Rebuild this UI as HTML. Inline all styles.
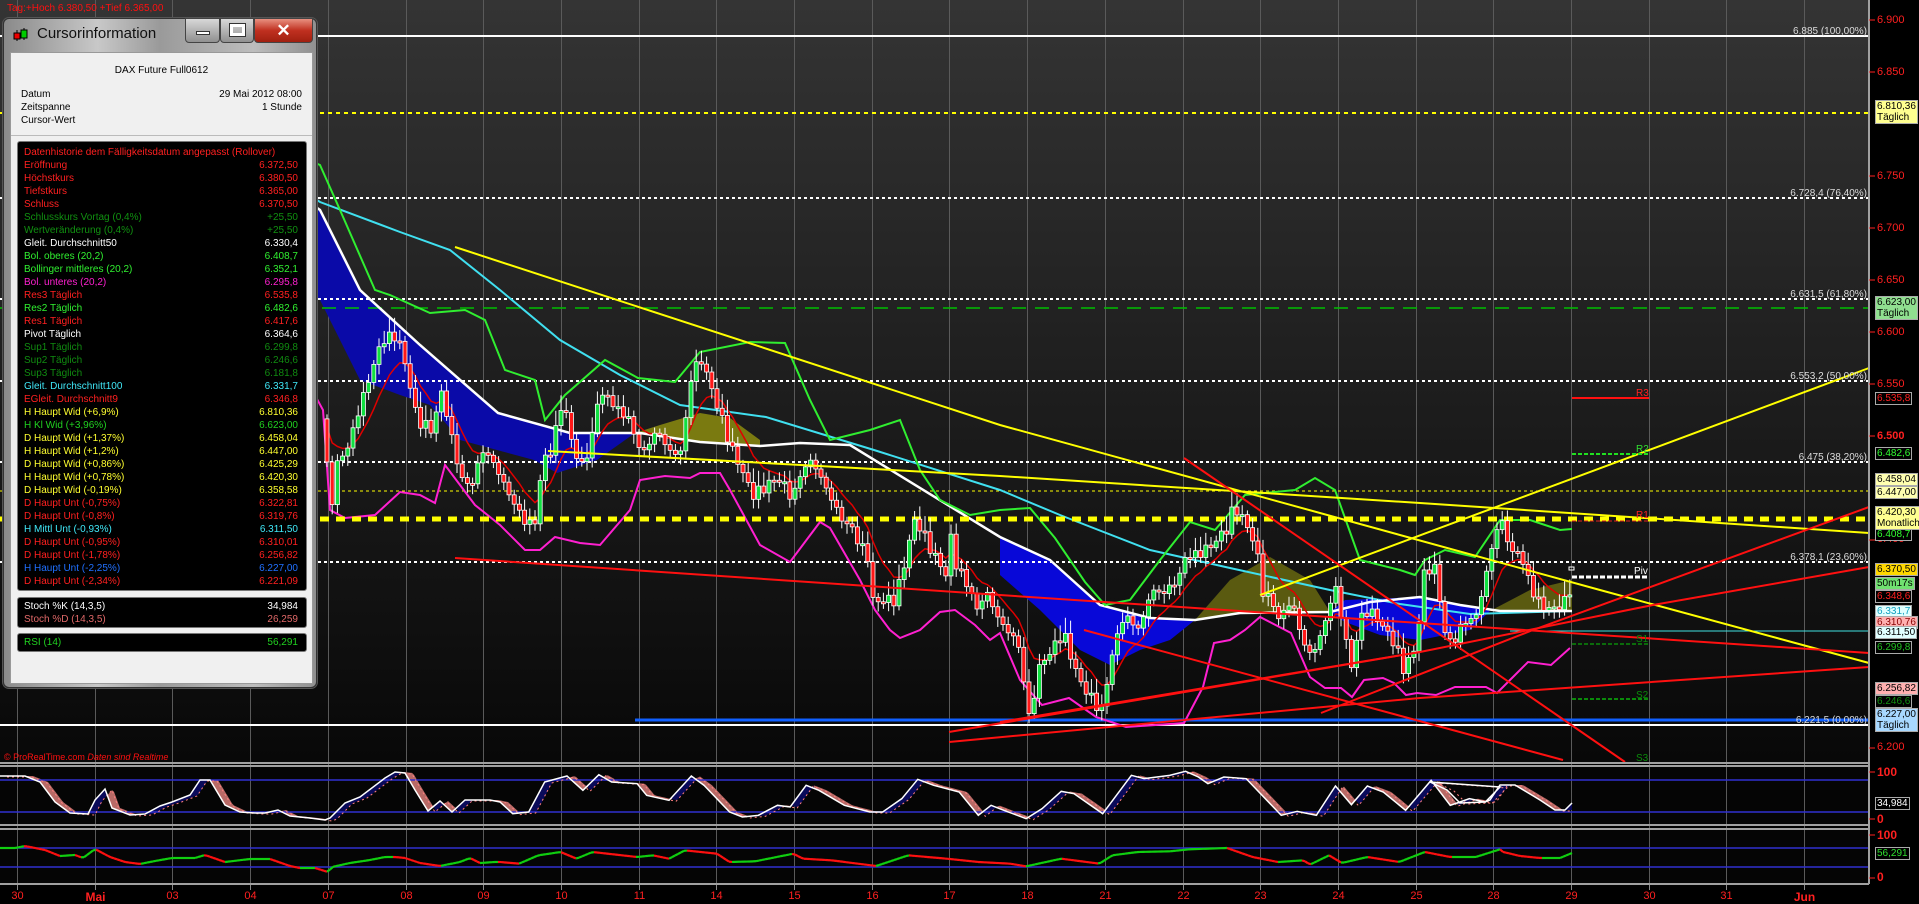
<!DOCTYPE html>
<html><head><meta charset="utf-8"><style>
*{margin:0;padding:0;box-sizing:border-box}
body{width:1919px;height:903px;overflow:hidden;background:#000;font-family:"Liberation Sans",sans-serif;position:relative}
#c{position:absolute;left:0;top:0}
.win{position:absolute;left:3px;top:18px;width:314px;height:670px;border-radius:6px;border:1px solid #333;
background:linear-gradient(90deg,#8a8a8a,#c8c8c8 30%,#9a9a9a 50%,#bdbdbd 80%,#909090);box-shadow:0 0 0 1px #555}
.ttl{position:absolute;left:33px;top:6px;font-size:15px;color:#101010}
.icon{position:absolute;left:9px;top:8px;width:16px;height:16px}
.btn{position:absolute;top:-1px;height:25px;border:1px solid #444;border-radius:0 0 4px 4px}
.content{position:absolute;left:6px;top:33px;width:303px;height:632px;background:#f0f0f0;border:1px solid #999}
.t{position:absolute;font-size:10px;white-space:nowrap}
.box{position:absolute;left:6px;width:290px;background:#000;border:1px solid #777;border-radius:3px}
.row{position:absolute;left:6px;right:8px;height:13px;font-size:10px;line-height:13px;white-space:nowrap}
.row span{position:absolute;right:0}
.ax{position:absolute;font-size:10px;white-space:nowrap;line-height:11px;padding:0 1px}
.rl{position:absolute;left:1877px;font-size:11px;color:#ff2020}
.dl{position:absolute;top:890px;font-size:11px;color:#ff2020;transform:translateX(-50%)}
.fl{position:absolute;font-size:10px;color:#ddd;right:52px}
</style></head><body>
<svg id="c" width="1919" height="903" xmlns="http://www.w3.org/2000/svg">
<defs>
<linearGradient id="bg" x1="0" y1="0" x2="0" y2="1"><stop offset="0" stop-color="#343434"/><stop offset="1" stop-color="#080808"/></linearGradient>
</defs>
<rect x="0" y="0" width="1869" height="763" fill="url(#bg)"/>
<rect x="0" y="766" width="1869" height="59" fill="#050505"/>
<rect x="0" y="829" width="1869" height="55" fill="#050505"/>
<g id="grid" stroke="#5a5a5a" stroke-width="1"></g>
<g id="under"></g>
<line x1="0" y1="36" x2="1869" y2="36" stroke="#fff" stroke-width="2"/>
<line x1="0" y1="113" x2="1869" y2="113" stroke="#ffff00" stroke-width="2" stroke-dasharray="4,4"/>
<g stroke="#fff" stroke-width="2" stroke-dasharray="3,3">
<line x1="0" y1="198" x2="1869" y2="198"/><line x1="0" y1="299" x2="1869" y2="299"/>
<line x1="0" y1="381" x2="1869" y2="381"/><line x1="0" y1="462" x2="1869" y2="462"/>
<line x1="0" y1="562" x2="1869" y2="562"/></g>
<line x1="0" y1="308" x2="1869" y2="308" stroke="#00c000" stroke-width="1.5" stroke-dasharray="14,9"/>
<line x1="0" y1="491" x2="1869" y2="491" stroke="#ffff00" stroke-width="1" stroke-dasharray="3,3"/>
<line x1="0" y1="725" x2="1869" y2="725" stroke="#fff" stroke-width="2"/>
<line x1="635" y1="720" x2="1869" y2="720" stroke="#1060ff" stroke-width="3"/>
<line x1="1510" y1="631" x2="1869" y2="631" stroke="#40e0e0" stroke-width="1"/>
<g id="ind"></g>
<line x1="0" y1="519" x2="1869" y2="519" stroke="#ffff00" stroke-width="5" stroke-dasharray="9,7"/>
<g id="cand"></g>
<g id="lines" fill="none" stroke-width="2">
<polyline points="455,247 1000,425 1600,590 1869,663" stroke="#ffff00"/>
<polyline points="548,451 1000,476 1420,503 1869,533" stroke="#ffff00"/>
<polyline points="1260,595 1869,368" stroke="#ffff00"/>
<polyline points="455,558 1000,595 1869,653" stroke="#ff1010"/>
<polyline points="1184,458 1625,762" stroke="#ff1010"/>
<polyline points="1321,713 1533,630 1869,507" stroke="#ff1010"/>
<polyline points="949,732 1420,652 1653,605 1869,567" stroke="#ff1010"/>
<polyline points="949,742 1420,698 1869,667" stroke="#ff1010"/>
<polyline points="1084,630 1563,760" stroke="#ff1010"/>
<polyline points="1000,722 1420,652" stroke="#ff1010"/>
</g>
<line x1="1572" y1="398" x2="1649" y2="398" stroke="#ff1010" stroke-width="2"/>
<line x1="1572" y1="454" x2="1649" y2="454" stroke="#20e020" stroke-width="2" stroke-dasharray="4,2"/>
<line x1="1572" y1="521" x2="1649" y2="521" stroke="#e02020" stroke-width="1" stroke-dasharray="4,2"/>
<line x1="1572" y1="577" x2="1649" y2="577" stroke="#fff" stroke-width="3" stroke-dasharray="5,2"/>
<rect x="1569" y="567" width="5" height="3" fill="none" stroke="#fff"/>
<line x1="1572" y1="644" x2="1649" y2="644" stroke="#0a8a0a" stroke-width="1.5" stroke-dasharray="4,2"/>
<line x1="1572" y1="699" x2="1649" y2="699" stroke="#0a8a0a" stroke-width="2" stroke-dasharray="4,2"/>
<g font-family="Liberation Sans" font-size="10">
<text x="1636" y="396" fill="#ff2020">R3</text><text x="1636" y="452" fill="#30e030">R2</text>
<text x="1636" y="518" fill="#ff2020">R1</text><text x="1634" y="574" fill="#fff">Piv</text>
<text x="1636" y="642" fill="#0a8a0a">S1</text><text x="1636" y="698" fill="#0a8a0a">S2</text><text x="1636" y="761" fill="#0a8a0a">S3</text>
</g>
<g id="osc"></g>
<g stroke="#3030d0" stroke-width="1.5"><line x1="0" y1="780" x2="1869" y2="780"/><line x1="0" y1="812" x2="1869" y2="812"/>
<line x1="0" y1="848" x2="1869" y2="848"/><line x1="0" y1="867" x2="1869" y2="867"/></g>
<g id="osc2"></g>
<g stroke="#a0a0a0" stroke-width="2" fill="none">
<line x1="0" y1="763" x2="1869" y2="763"/><line x1="0" y1="766" x2="1869" y2="766"/>
<line x1="0" y1="825" x2="1869" y2="825"/><line x1="0" y1="829" x2="1869" y2="829"/>
<line x1="0" y1="884" x2="1869" y2="884"/><line x1="1869" y1="0" x2="1869" y2="884"/></g>
<g id="ticks" stroke="#ff2020" stroke-width="1"></g>
<text x="4" y="760" font-size="9" fill="#ff1010" font-family="Liberation Sans">© ProRealTime.com <tspan font-style="italic">Daten sind Realtime</tspan></text>
<text x="7" y="11" font-size="10" fill="#ff1010" font-family="Liberation Sans">Tag:+Hoch 6.380,50 +Tief 6.365,00</text>
</svg>

<div class="fl" style="top:26px">6.885 (100,00%)</div>
<div class="fl" style="top:188px">6.728,4 (76,40%)</div>
<div class="fl" style="top:289px">6.631,5 (61,80%)</div>
<div class="fl" style="top:371px">6.553,2 (50,00%)</div>
<div class="fl" style="top:452px">6.475 (38,20%)</div>
<div class="fl" style="top:552px">6.378,1 (23,60%)</div>
<div class="fl" style="top:715px">6.221,5 (0,00%)</div>

<div class="rl" style="top:14px">6.900</div><div class="rl" style="top:66px">6.850</div>
<div class="rl" style="top:170px">6.750</div><div class="rl" style="top:222px">6.700</div>
<div class="rl" style="top:274px">6.650</div><div class="rl" style="top:326px">6.600</div>
<div class="rl" style="top:378px">6.550</div><div class="rl" style="top:430px;font-weight:bold">6.500</div>
<div class="rl" style="top:533px">6.400</div><div class="rl" style="top:741px">6.200</div>
<div class="rl" style="top:765px;font-weight:bold;font-size:12px">100</div>
<div class="rl" style="top:812px;font-weight:bold;font-size:12px">0</div>
<div class="rl" style="top:828px;font-weight:bold;font-size:12px">100</div>
<div class="rl" style="top:870px;font-weight:bold;font-size:12px">0</div>

<div class="ax" style="left:1875px;top:100px;background:#ffff90;border:1px solid #aaa;color:#000">6.810,36<br>Täglich</div>
<div class="ax" style="left:1875px;top:296px;background:#90e090;border:1px solid #aaa;color:#000">6.623,00<br>Täglich</div>
<div class="ax" style="left:1875px;top:392px;background:#000;border:1px solid #aaa;color:#ff2020">6.535,8</div>
<div class="ax" style="left:1875px;top:447px;background:#000;border:1px solid #aaa;color:#30ff30">6.482,6</div>
<div class="ax" style="left:1875px;top:473px;background:#ffffb0;border:1px solid #aaa;color:#000">6.458,04</div>
<div class="ax" style="left:1875px;top:486px;background:#ffffb0;border:1px solid #aaa;color:#000">6.447,00</div>
<div class="ax" style="left:1875px;top:528px;background:#000;border:1px solid #aaa;color:#30ff30">6.408,7</div>
<div class="ax" style="left:1875px;top:506px;background:#ffff90;border:1px solid #aaa;color:#000">6.420,30<br>Monatlich</div>
<div class="ax" style="left:1875px;top:563px;background:#ffd700;border:1px solid #aaa;color:#000">6.370,50</div>
<div class="ax" style="left:1875px;top:577px;background:#70e070;border:1px solid #aaa;color:#000">50m17s</div>
<div class="ax" style="left:1875px;top:590px;background:#000;border:1px solid #aaa;color:#ff2020">6.348,6</div>
<div class="ax" style="left:1875px;top:605px;background:#e0ffff;border:1px solid #aaa;color:#10a0c0">6.331,7</div>
<div class="ax" style="left:1875px;top:616px;background:#ffb0b0;border:1px solid #aaa;color:#800">6.310,76</div>
<div class="ax" style="left:1875px;top:626px;background:#e0ffff;border:1px solid #aaa;color:#000">6.311,50</div>
<div class="ax" style="left:1875px;top:641px;background:#000;border:1px solid #aaa;color:#20c020">6.299,8</div>
<div class="ax" style="left:1875px;top:682px;background:#ffb0b0;border:1px solid #aaa;color:#000">6.256,82</div>
<div class="ax" style="left:1875px;top:695px;background:#000;border:1px solid #aaa;color:#109010">6.246,6</div>
<div class="ax" style="left:1875px;top:708px;background:#a8d8ff;border:1px solid #aaa;color:#000">6.227,00<br>Täglich</div>
<div class="ax" style="left:1875px;top:797px;background:#000;border:1px solid #aaa;color:#fff">34,984</div>
<div class="ax" style="left:1875px;top:847px;background:#000;border:1px solid #aaa;color:#30e030">56,291</div>

<div id="dates"></div>

<div class="win">
  <svg class="icon" viewBox="0 0 16 16"><line x1="4" y1="3" x2="4" y2="14" stroke="#000"/><rect x="1" y="6" width="6" height="6" fill="#e00" stroke="#000"/><line x1="11" y1="1" x2="11" y2="13" stroke="#000"/><rect x="8" y="3" width="6" height="8" fill="#0c0" stroke="#000"/></svg>
  <div class="ttl">Cursorinformation</div>
  <div class="btn" style="left:181px;width:35px;background:linear-gradient(#d8d8d8,#909090)"><div style="position:absolute;left:10px;top:12px;width:14px;height:4px;background:#fff;border:1px solid #333"></div></div>
  <div class="btn" style="left:216px;width:34px;background:linear-gradient(#d8d8d8,#909090)"><div style="position:absolute;left:9px;top:5px;width:15px;height:12px;border:3px solid #fff;outline:1px solid #333"></div></div>
  <div class="btn" style="left:250px;width:59px;background:linear-gradient(#e89080,#c03020 50%,#a02010);color:#fff;font-size:17px;font-weight:bold;text-align:center;line-height:24px">✕</div>
  <div class="content">
    <div class="t" style="left:0;width:100%;text-align:center;top:12px">DAX Future Full0612</div>
    <div class="t" style="left:10px;top:36px">Datum</div><div class="t" style="right:10px;top:36px">29 Mai 2012 08:00</div>
    <div class="t" style="left:10px;top:49px">Zeitspanne</div><div class="t" style="right:10px;top:49px">1 Stunde</div>
    <div class="t" style="left:10px;top:62px">Cursor-Wert</div>
    <div style="position:absolute;left:0;right:0;top:82px;border-top:1px solid #bbb"></div>
    <div class="box" style="top:88px;height:450px" id="rows"></div>
    <div class="box" style="top:544px;height:31px">
      <div class="row" style="top:2px;color:#fff">Stoch %K (14,3,5)<span>34,984</span></div>
      <div class="row" style="top:15px;color:#e06868">Stoch %D (14,3,5)<span>26,259</span></div>
    </div>
    <div class="box" style="top:580px;height:19px">
      <div class="row" style="top:2px;color:#20d020">RSI (14)<span>56,291</span></div>
    </div>
  </div>
</div>

<script>
(function(){
var NS="http://www.w3.org/2000/svg";
function el(p,t,a){var e=document.createElementNS(NS,t);for(var k in a)e.setAttribute(k,a[k]);p.appendChild(e);return e;}
var g=document.getElementById('grid'),tk=document.getElementById('ticks');
var days=["30","Mai","03","04","07","08","09","10","11","14","15","16","17","18","21","22","23","24","25","28","29","30","31","Jun"];
var dh="";
for(var i=0;i<24;i++){var x=Math.round(17+77.7*i)+.5;el(g,'line',{x1:x,y1:0,x2:x,y2:884});el(g,'line',{x1:x,y1:884,x2:x,y2:890,stroke:'#888'});
 var b=(days[i]=="Mai"||days[i]=="Jun");dh+='<div class="dl" style="left:'+x+'px;'+(b?'font-weight:bold;font-size:12px':'')+'">'+days[i]+'</div>';}
document.getElementById('dates').innerHTML=dh;
[20,72,176,228,280,332,384,436,540,748,772,819,835,878].forEach(function(y){el(tk,'line',{x1:1869,y1:y,x2:1875,y2:y});});
function interp(P,x){if(x<=P[0][0])return P[0][1];for(var i=1;i<P.length;i++){if(x<=P[i][0]){var a=P[i-1],b=P[i];return a[1]+(b[1]-a[1])*(x-a[0])/(b[0]-a[0]);}}return P[P.length-1][1];}
function pts(P){return P.map(function(p){return p[0]+','+p[1]}).join(' ');}
var ind=document.getElementById('ind'),und=document.getElementById('under');
var ma50=[[263,170],[320,210],[360,290],[420,345],[498,413],[570,433],[640,433],[700,442],[760,446],[800,443],[850,445],[1000,537],[1050,560],[1100,605],[1150,618],[1195,620],[1240,613],[1330,612],[1370,602],[1420,597],[1460,605],[1500,611],[1572,611]];
var low1=[[263,240],[320,300],[360,380],[400,395],[430,405],[460,440],[534,460],[557,473],[597,460],[635,433]];
el(und,'polygon',{points:pts(ma50.filter(function(p){return p[0]<=635}).concat(low1.slice().reverse())),fill:'#0a0aa8'});
el(und,'polygon',{points:pts([[635,433],[660,425],[700,413],[730,418],[760,440],[760,446],[700,442],[640,433]]),fill:'#7a7a10'});
var low2=[[1000,575],[1040,610],[1080,650],[1110,665],[1140,650],[1170,640],[1195,620]];
el(und,'polygon',{points:pts(ma50.filter(function(p){return p[0]>=1000&&p[0]<=1195}).concat(low2.slice().reverse())),fill:'#0808d8'});
el(und,'polygon',{points:pts([[1195,620],[1230,580],[1270,557],[1310,580],[1330,612],[1240,613]]),fill:'#5a5a10'});
el(und,'polygon',{points:pts([[1330,612],[1345,600],[1420,597],[1460,605],[1490,611],[1470,630],[1420,640],[1380,635],[1345,622]]),fill:'#0808d8'});
el(und,'polygon',{points:pts([[1490,611],[1530,590],[1572,580],[1572,611]]),fill:'#5a5a10'});
el(ind,'polyline',{points:pts([[263,165],[320,202],[400,232],[450,250],[500,290],[560,340],[620,375],[680,405],[766,417],[874,450],[1000,490],[1060,515],[1150,550],[1230,568],[1330,590],[1400,604],[1470,614],[1572,611]]),fill:'none',stroke:'#40e0f0','stroke-width':2});
el(ind,'polyline',{points:pts(ma50),fill:'none',stroke:'#fff','stroke-width':2.5});
el(ind,'polyline',{points:pts([[263,140],[320,165],[340,210],[375,290],[390,295],[430,313],[465,310],[485,320],[505,370],[535,380],[545,420],[565,395],[605,360],[638,378],[675,382],[700,352],[750,342],[785,343],[810,400],[830,440],[870,430],[900,420],[920,470],[940,500],[970,515],[1000,510],[1030,508],[1055,538],[1085,582],[1105,605],[1130,600],[1160,560],[1190,522],[1215,530],[1245,495],[1295,490],[1315,478],[1335,490],[1360,560],[1400,570],[1415,575],[1425,560],[1445,550],[1475,557],[1500,520],[1530,520],[1560,530],[1572,529]]),fill:'none',stroke:'#30ee30','stroke-width':2});
el(ind,'polyline',{points:pts([[263,300],[323,410],[330,510],[345,518],[375,515],[400,492],[420,495],[435,503],[445,465],[460,485],[475,505],[500,525],[525,550],[540,550],[555,537],[580,543],[600,545],[630,510],[640,480],[665,476],[690,478],[700,473],[720,473],[730,490],[760,545],[790,562],[820,522],[830,528],[860,580],[875,610],[890,630],[900,638],[920,630],[940,612],[955,610],[975,625],[990,640],[1000,633],[1020,680],[1042,705],[1069,698],[1096,717],[1126,727],[1184,723],[1203,687],[1214,643],[1230,640],[1245,630],[1260,617],[1291,633],[1310,677],[1325,688],[1341,688],[1352,697],[1364,680],[1383,678],[1394,683],[1406,695],[1417,693],[1436,695],[1455,687],[1486,687],[1497,693],[1513,677],[1528,662],[1551,665],[1570,648]]),fill:'none',stroke:'#ff20d0','stroke-width':2});
var C=[[320,390],[329,520],[333,465],[345,450],[360,400],[380,340],[395,335],[405,370],[415,420],[430,430],[440,390],[450,440],[460,480],[470,485],[480,450],[490,460],[500,480],[510,500],[525,525],[535,520],[540,460],[550,450],[560,400],[570,440],[578,470],[590,440],[595,400],[605,395],[615,410],[625,415],[640,455],[655,430],[670,455],[680,450],[690,370],[700,360],[710,390],[720,420],[730,450],[740,470],[750,495],[760,490],[770,480],[780,480],[790,500],[800,470],[810,460],[820,480],[830,500],[840,520],[850,528],[855,540],[862,550],[867,560],[872,610],[877,600],[883,600],[894,600],[899,575],[905,555],[911,520],[917,525],[922,535],[928,548],[933,556],[944,575],[949,537],[955,570],[961,573],[966,590],[972,595],[977,620],[983,582],[988,605],[994,610],[999,625],[1005,630],[1010,634],[1016,645],[1022,680],[1027,718],[1033,690],[1038,665],[1050,650],[1061,632],[1077,680],[1094,705],[1100,710],[1111,650],[1122,615],[1138,630],[1149,590],[1161,593],[1176,580],[1184,555],[1195,555],[1210,545],[1228,525],[1231,505],[1239,515],[1254,545],[1260,590],[1272,605],[1277,620],[1289,600],[1304,650],[1310,655],[1321,630],[1333,585],[1344,640],[1349,670],[1356,630],[1362,610],[1373,615],[1383,630],[1394,645],[1400,670],[1411,655],[1417,620],[1421,575],[1432,565],[1438,600],[1444,640],[1455,640],[1459,625],[1475,615],[1494,530],[1499,520],[1511,555],[1517,550],[1528,585],[1538,605],[1550,610],[1566,600],[1571,570]];
var cg=document.getElementById('cand'),ema=[];
var pv=interp(C,322),e=pv;
for(var x=325;x<=1568;x+=5.2){
 var n=Math.sin(x*1.7)*6+Math.sin(x*0.53)*4;
 var c=interp(C,x)+n*0.6;var t1=Math.min(pv,c),b1=Math.max(pv,c);if(b1-t1<2)b1=t1+2;
 var up=c<pv;
 el(cg,'line',{x1:x+2,y1:t1-4-Math.abs(n)*1.2,x2:x+2,y2:b1+4+Math.abs(Math.cos(x))*6,stroke:'#fff','stroke-width':1});
 el(cg,'rect',{x:x,y:t1,width:4,height:b1-t1,fill:up?'#10e040':'#ff1818',stroke:'#fff','stroke-width':0.8});
 e=e+(c-e)*0.2;ema.push([x+2,e.toFixed(1)]);pv=c;}
var es="";for(var i=0;i<ema.length;i++){es+=ema[i][0]+','+ema[i][1]+' ';}
el(ind,'polyline',{points:es,fill:'none',stroke:'#e00000','stroke-width':1.5});
var K=[[0,776],[25,776],[40,782],[55,802],[70,813],[88,814],[95,800],[105,789],[112,808],[130,815],[145,814],[160,806],[172,802],[190,795],[200,780],[210,780],[225,805],[240,812],[255,813],[265,813],[278,810],[290,816],[310,818],[325,820],[330,818],[345,803],[360,797],[385,778],[395,772],[405,773],[415,790],[428,811],[440,801],[452,812],[465,800],[480,800],[490,800]];
[[0,120],[20,155],[45,150],[70,60],[105,42],[130,85],[155,38],[175,60],[215,65],[230,100],[265,115],[300,42],[320,70],[360,150],[380,165],[405,160],[435,130],[455,135],[480,70],[500,85],[540,130],[580,150],[600,150],[630,110],[655,52],[680,70],[720,90],[750,160],[770,130],[790,145],[825,170],[850,140],[880,88],[900,95],[945,155],[990,40],[1010,50],[1050,40],[1075,28],[1095,45],[1110,65],[1135,45],[1170,50],[1225,160],[1250,148],[1280,160],[1310,72],[1335,128],[1360,72],[1385,90],[1420,145],[1460,55],[1490,130],[1520,110],[1545,120],[1568,75]].forEach(function(p){K.push([500+p[0]/1.568,762+p[1]/3]);});
[[1430,782],[1447,790],[1460,803],[1485,802],[1490,800],[1500,785],[1515,785],[1540,800],[1555,810],[1565,810],[1572,803]].forEach(function(p){K.push(p)});
var os=document.getElementById('osc');
for(var x=0;x<1571;x+=2){var k1=interp(K,x),k2=interp(K,x+2),d1=interp(K,x-8),d2=interp(K,x-6);
 el(os,'polygon',{points:x+','+k1+' '+(x+2)+','+k2+' '+(x+2)+','+d2+' '+x+','+d1,fill:(k1<d1)?'#0a0a5a':'#b86a66'});}
var o2=document.getElementById('osc2');
el(o2,'polyline',{points:pts(K.map(function(p){return [p[0]+7,p[1]+1]}).filter(function(p){return p[0]<=1572})),fill:'none',stroke:'#ff8080','stroke-width':1,'stroke-dasharray':'2,3'});
el(o2,'polyline',{points:pts(K),fill:'none',stroke:'#fff','stroke-width':1.5});
var R=[[0,848],[15,848],[25,846],[45,850],[60,856],[75,855],[83,858],[95,849],[110,857],[125,862],[140,864],[155,861],[172,858],[195,858],[205,855],[225,862],[250,859],[270,859],[290,866],[300,868],[315,868],[328,872],[332,867],[350,863],[370,860],[385,857],[395,857],[405,858],[420,863],[440,866],[460,862],[470,858],[480,863],[495,862]];
[[0,300],[30,305],[60,280],[95,270],[120,290],[145,270],[215,285],[240,280],[265,290],[290,265],[340,275],[360,300],[400,298],[460,275],[475,290],[520,295],[590,312],[640,280],[700,290],[750,300],[800,305],[825,313],[880,290],[920,300],[940,305],[960,280],[1000,270],[1050,268],[1080,262],[1140,258],[1180,285],[1220,300],[1260,295],[1270,308],[1300,280],[1320,303],[1360,285],[1410,300],[1450,270],[1490,285],[1530,285],[1568,262]].forEach(function(p){R.push([500+p[0]/1.568,762+p[1]/3]);});
[[1420,851],[1450,859],[1460,857],[1495,850],[1520,856],[1540,858],[1560,858],[1572,853]].forEach(function(p){R.push(p)});
for(var x=0;x<1571;x+=3){var a=interp(R,x),b=interp(R,x+3);el(o2,'line',{x1:x,y1:a,x2:x+3,y2:b,stroke:(b<=a)?'#10d010':'#ff1010','stroke-width':2.2});}
var rows=[["Datenhistorie dem Fälligkeitsdatum angepasst (Rollover)","","#ff2020"],["Eröffnung","6.372,50","#ff2020"],["Höchstkurs","6.380,50","#ff2020"],["Tiefstkurs","6.365,00","#ff2020"],["Schluss","6.370,50","#ff2020"],["Schlusskurs Vortag (0,4%)","+25,50","#109010"],["Wertveränderung (0,4%)","+25,50","#109010"],["Gleit. Durchschnitt50","6.330,4","#ffffff"],["Bol. oberes (20,2)","6.408,7","#30f030"],["Bollinger mittleres (20,2)","6.352,1","#30f030"],["Bol. unteres (20,2)","6.295,8","#ff20d0"],["Res3 Täglich","6.535,8","#ff2020"],["Res2 Täglich","6.482,6","#30f030"],["Res1 Täglich","6.417,6","#ff2020"],["Pivot Täglich","6.364,6","#ffffff"],["Sup1 Täglich","6.299,8","#108a10"],["Sup2 Täglich","6.246,6","#108a10"],["Sup3 Täglich","6.181,8","#108a10"],["Gleit. Durchschnitt100","6.331,7","#40e8f8"],["EGleit. Durchschnitt9","6.346,8","#ff2020"],["H Haupt Wid (+6,9%)","6.810,36","#ffff30"],["H Kl Wid (+3,96%)","6.623,00","#20d020"],["D Haupt Wid (+1,37%)","6.458,04","#ffff30"],["H Haupt Wid (+1,2%)","6.447,00","#ffff30"],["D Haupt Wid (+0,86%)","6.425,29","#ffff30"],["H Haupt Wid (+0,78%)","6.420,30","#ffff30"],["D Haupt Wid (-0,19%)","6.358,58","#ffff30"],["D Haupt Unt (-0,75%)","6.322,81","#ff2020"],["D Haupt Unt (-0,8%)","6.319,76","#ff2020"],["H Mittl Unt (-0,93%)","6.311,50","#40e8f8"],["D Haupt Unt (-0,95%)","6.310,01","#ff2020"],["D Haupt Unt (-1,78%)","6.256,82","#ff2020"],["H Haupt Unt (-2,25%)","6.227,00","#2070ff"],["D Haupt Unt (-2,34%)","6.221,09","#ff2020"]];
var h="";rows.forEach(function(r,i){h+='<div class="row" style="top:'+(4+i*13)+'px;color:'+r[2]+'">'+r[0]+'<span>'+r[1]+'</span></div>';});
document.getElementById('rows').innerHTML=h;
})();
</script>
</body></html>
